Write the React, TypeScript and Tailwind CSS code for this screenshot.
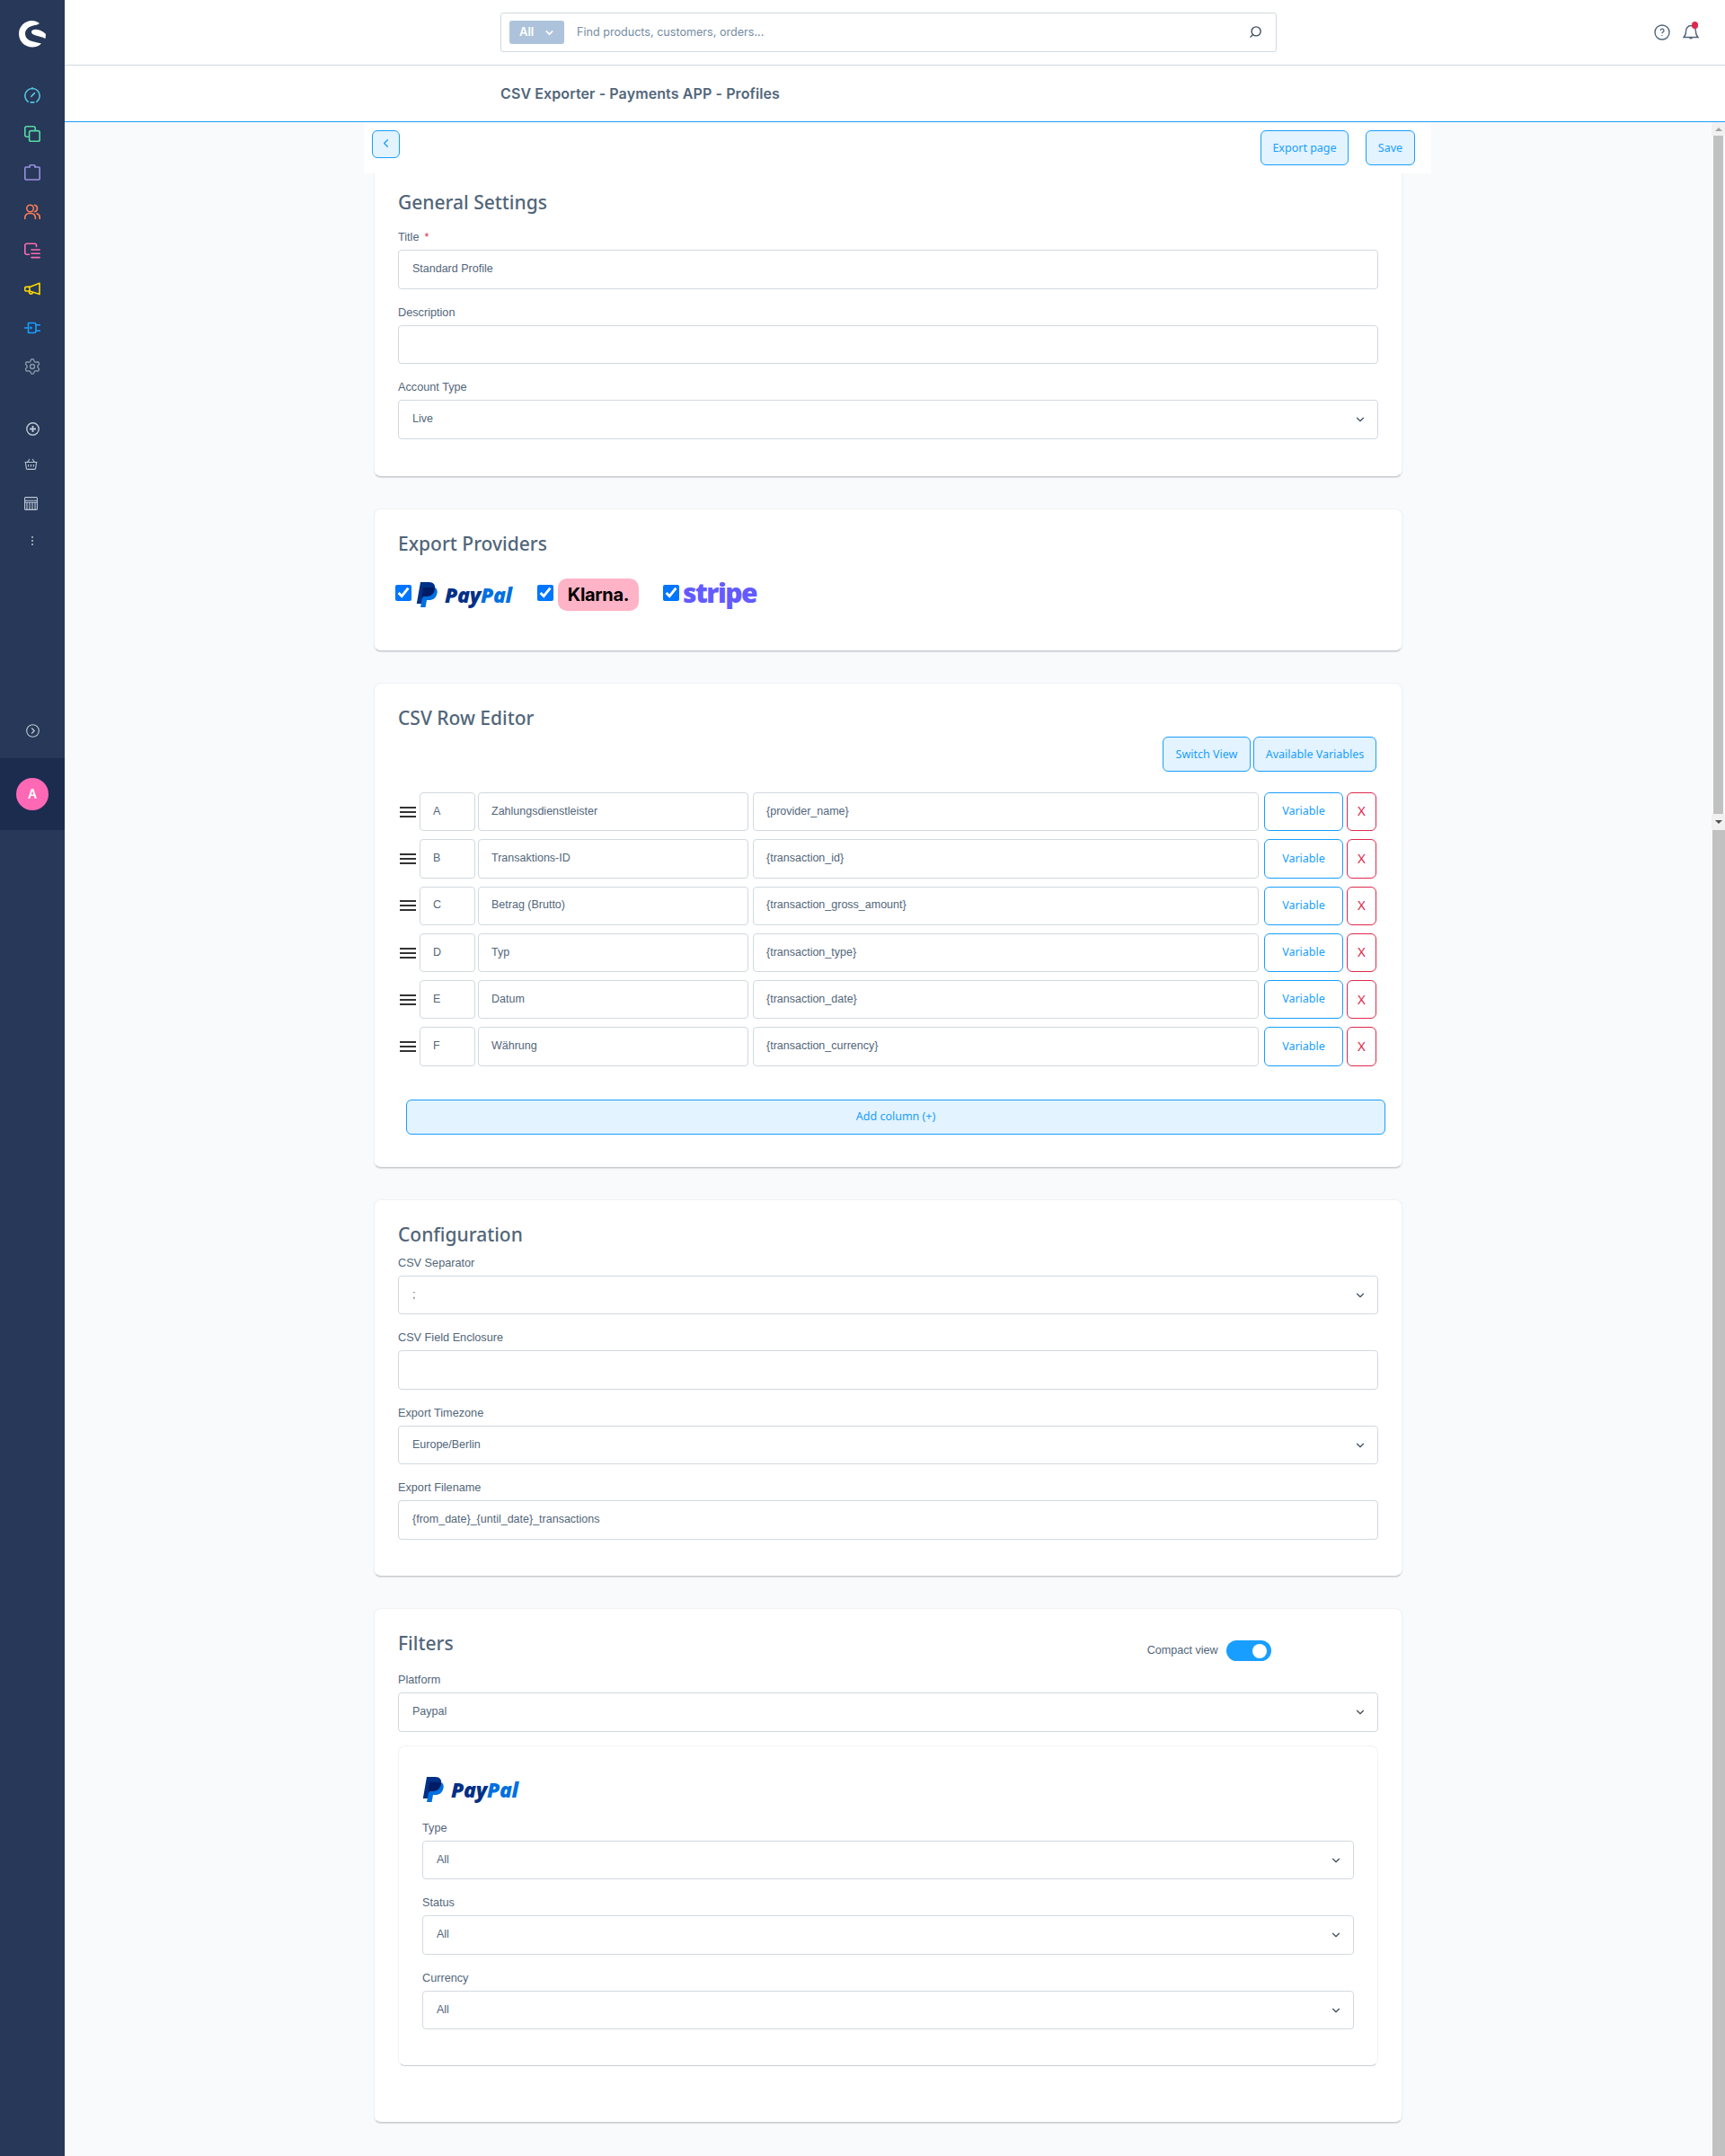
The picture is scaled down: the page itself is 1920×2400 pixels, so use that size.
import { ChevronDown, ChevronLeft, Search, Settings } from "lucide-react";

const uiFont = "font-['Liberation_Sans',Arial,sans-serif]";
const headFont = "font-['Noto_Sans',sans-serif]";

const rows = [
  ["A", "Zahlungsdienstleister", "{provider_name}"],
  ["B", "Transaktions-ID", "{transaction_id}"],
  ["C", "Betrag (Brutto)", "{transaction_gross_amount}"],
  ["D", "Typ", "{transaction_type}"],
  ["E", "Datum", "{transaction_date}"],
  ["F", "Währung", "{transaction_currency}"],
];

function NavIcons() {
  const base = {
    width: 18,
    height: 18,
    viewBox: "0 0 18 18",
    fill: "none",
    strokeWidth: 1.6,
    strokeLinecap: "round" as const,
    strokeLinejoin: "round" as const,
  };
  return (
    <div className="mt-[12px] flex flex-col">
      {/* ================= MODULES ================= */}
      <div className="flex h-[43.2px] items-center justify-center">
        <svg {...base} stroke="#57c3df">
          <path d="M4.2 16.3A8.2 8.2 0 1 1 13.8 16.3" />
          <path d="M7.2 16.9h3.6" />
          <path d="M7.8 10.4 11.4 6.6" />
          <path d="M9 .8v1" />
        </svg>
      </div>
      <div className="flex h-[43.2px] items-center justify-center">
        <svg {...base} stroke="#57d9a3">
          <path d="M4.8 12.2H2.6A1.8 1.8 0 0 1 .8 10.4V2.6A1.8 1.8 0 0 1 2.6.8h7.8a1.8 1.8 0 0 1 1.8 1.8v2.2" />
          <rect x="5.6" y="5.6" width="11.6" height="11.6" rx="1.8" />
        </svg>
      </div>
      <div className="flex h-[43.2px] items-center justify-center">
        <svg {...base} stroke="#9a8fe0">
          <path d="M6 3H2a1.2 1.2 0 0 0-1.2 1.2v11.6A1.2 1.2 0 0 0 2 17h14a1.2 1.2 0 0 0 1.2-1.2V4.2A1.2 1.2 0 0 0 16 3h-4" />
          <path d="M6 3V1.8A1 1 0 0 1 7 .8h4a1 1 0 0 1 1 1V3" />
        </svg>
      </div>
      <div className="flex h-[43.2px] items-center justify-center pt-[1px]">
        <svg {...base} stroke="#ff7d55">
          <circle cx="6.6" cy="5" r="3.8" />
          <path d="M.8 16.5V15a4.5 4.5 0 0 1 4.5-4.5h2.6A4.5 4.5 0 0 1 12.4 15v1.5" />
          <path d="M11.5 1.3a3.8 3.8 0 0 1 0 7.4" />
          <path d="M14 10.8a4.3 4.3 0 0 1 3.2 4.2v1.5" />
        </svg>
      </div>
      <div className="flex h-[43.2px] items-center justify-center pt-[1px]">
        <svg {...base} stroke="#ff68b4">
          <path d="M13.5 4.5V3a1.8 1.8 0 0 0-1.8-1.8H2.6A1.8 1.8 0 0 0 .8 3v8.5a1.8 1.8 0 0 0 1.8 1.8h2.9" />
          <path d="M8 8h9.2M8 12.3h9.2M8 16.6h9.2" />
        </svg>
      </div>
      <div className="flex h-[43.2px] items-center justify-center">
        <svg {...base} stroke="#ffd700">
          <path d="M17 2.2 6 6.4H1.8a1 1 0 0 0-1 1V10a1 1 0 0 0 1 1H6l11 3.6Z" />
          <path d="M6 6.4V11" />
          <path d="M5.6 11.5a2 2 0 0 0 3.9 1.2" />
        </svg>
      </div>
      <div className="flex h-[43.2px] items-center justify-center">
        <svg {...base} stroke="#189eff">
          <path d="M4.5 3.500H11a2 2 0 0 1 2 2v7a2 2 0 0 1-2 2H4.500Z" />
          <path d="M.5 9h4M13 5.800h4.500M13 12.200h4.500" />
          <circle cx="7.500" cy="9" r=".6" />
        </svg>
      </div>
      <div className="flex h-[43.2px] items-center justify-center">
        <Settings size={20} strokeWidth={1.7} color="#8799ab" />
      </div>
    </div>
  );
}

function QuickIcons() {
  const stroke = "#bcc8d6";
  return (
    <div className="mt-[27px] flex flex-col">
      <div className="flex h-[41px] items-center justify-center">
        <svg width="15" height="15" viewBox="0 0 15 15" fill="none" stroke={stroke} strokeWidth="1.4">
          <circle cx="7.500" cy="7.500" r="6.700" />
          <path d="M7.500 4v7M4 7.500h7" strokeWidth="1.800" />
        </svg>
      </div>
      <div className="flex h-[41px] items-center justify-center pb-[4px] pr-[4px]">
        <svg width="15" height="13" viewBox="0 0 15 13" fill="none" stroke={stroke} strokeWidth="1.100">
          <path d="M.6 4.500h13.800M1.400 4.500l1 7a1 1 0 0 0 1 .9h8.200a1 1 0 0 0 1-.9l1-7" />
          <path d="M3.500 4.500 6 1M11.500 4.500 9 1" />
          <path d="M4.700 7v2.600M7.500 7v2.600M10.300 7v2.600" />
        </svg>
      </div>
      <div className="flex h-[43px] items-center justify-center pr-[4px]">
        <svg width="15" height="15" viewBox="0 0 15 15" fill="none" stroke={stroke} strokeWidth="1.100">
          <rect x=".6" y=".6" width="13.800" height="13.800" rx="1" />
          <path d="M.6 4.200h13.800M.6 6.300h13.800" />
          <path d="M3 6.300v8M6 6.300v8M9 6.300v8M12 6.300v8" />
        </svg>
      </div>
      <div className="flex h-[41px] flex-col items-center justify-center gap-[2px]">
        <span className="h-[2px] w-[2px] rounded-full bg-[#bcc8d6]" />
        <span className="h-[2px] w-[2px] rounded-full bg-[#bcc8d6]" />
        <span className="h-[2px] w-[2px] rounded-full bg-[#bcc8d6]" />
      </div>
    </div>
  );
}

function Sidebar() {
  return (
    <aside className="flex w-[72px] shrink-0 flex-col bg-[#273858]">
      <div className="flex h-[72px] items-center justify-center pt-[3px]">
        <svg width="30" height="30" viewBox="0 0 30 30" fill="#fff">
          <path d="M23 3C20.500 1 17.500 0 14.500 0 6.500 0 0 6.500 0 14.500 0 23 6.500 29.500 15 29.500c4 0 7.500-1.500 10-4-2-.5-6-1.500-10-2.500-4.500-1-8-4-8-8.500C7 10 11 6.500 16 5.500c2.500-.5 5-1 7-2.500Z" />
          <path d="M14 12.500c0-3 5-3.500 9-2 3 1 5.500 3 7 4.500l-.5 5c-3.500-2-7-2.500-10.500-3.500-3-.8-5-1.700-5-4Z" />
        </svg>
      </div>
      <NavIcons />
      <QuickIcons />
      <div className="mt-[177px] flex h-[28px] items-center justify-center">
        <svg width="15" height="15" viewBox="0 0 15 15" fill="none" stroke="#bcc8d6" strokeWidth="1.100">
          <circle cx="7.500" cy="7.500" r="6.800" />
          <path d="M6.200 4.500 9.200 7.500 6.200 10.500" strokeWidth="1.300" />
        </svg>
      </div>
      <div className="mt-[16px] flex h-[80px] items-center justify-center bg-[#1b2c4f]">
        <div className="flex h-[36px] w-[36px] items-center justify-center rounded-full bg-[#ff68b4] font-['Inter',sans-serif] text-[14px] font-semibold text-white">
          A
        </div>
      </div>
    </aside>
  );
}

function Topbar() {
  return (
    <>
      <header className="flex h-[73px] items-center border-b border-[#d1d9e0] bg-white pl-[485px] pr-[29px] font-['Inter',sans-serif]">
        <div className="flex h-[44px] w-[864px] items-center rounded-[3px] border border-[#d1d9e0] pl-[9px] pr-[15px]">
          <div className="flex h-[26px] w-[61px] items-center gap-[11px] rounded-[3px] bg-[#adc3db] pl-[11px] text-[13px] font-semibold text-white">
            All
            <ChevronDown size={13} strokeWidth={3} />
          </div>
          <span className="ml-[14px] pt-[1px] text-[12.600px] text-[#758ca3]">Find products, customers, orders...</span>
          <Search size={15} strokeWidth={2.2} color="#3d4c5c" className="ml-auto -mt-[2px] -scale-x-100" />
        </div>
        <div className="ml-auto flex items-center gap-[14px]">
          <svg width="18" height="18" viewBox="0 0 18 18" fill="none" stroke="#52667a" strokeWidth="1.400">
            <circle cx="9" cy="9" r="8" />
            <path d="M7.200 7a1.900 1.900 0 1 1 2.600 1.800c-.6.3-.8.600-.8 1.400" strokeWidth="1.300" />
            <path d="M9 12.300v.6" strokeWidth="1.500" />
          </svg>
          <div className="relative h-[18px] w-[18px]">
            <svg width="18" height="18" viewBox="0 0 18 18" fill="none" stroke="#52667a" strokeWidth="1.400">
              <path d="M14.500 8c0-3.300-2.300-6.500-5.500-6.500S3.500 4.700 3.500 8c0 3-.8 5-2.500 6.500h16c-1.700-1.500-2.500-3.500-2.500-6.500Z" />
              <path d="M7.500 15a1.700 1.700 0 0 0 3 0" />
            </svg>
            <span className="absolute right-[1px] top-[-3px] h-[8px] w-[7px] rounded-full bg-[#de294c]" />
          </div>
        </div>
      </header>
      <div className="flex h-[63px] items-center border-b border-[#189eff] bg-white pl-[485px] font-['Inter',sans-serif] text-[16px] font-semibold tracking-[0.1px] text-[#52667a]">
        CSV Exporter - Payments APP - Profiles
      </div>
    </>
  );
}

function Label({ text, required }: { text: string; required?: boolean }) {
  return (
    <label className={`mb-[6px] block h-[18px] text-[12.700px] leading-[20px] text-[#52667a] ${uiFont}`}>
      {text}
      {required && <span className="ml-[6px] text-[#de294c]">*</span>}
    </label>
  );
}

function Field({ label, value, required, select }: { label: string; value?: string; required?: boolean; select?: boolean }) {
  return (
    <div className="mb-[16px] last:mb-0">
      <Label text={label} required={required} />
      <div className={`flex h-[43.5px] items-center justify-between rounded-[4px] border border-[#d1d9e0] bg-white pl-[15px] pr-[12px] text-[12.500px] text-[#52667a] ${uiFont}`}>
        <span className="-mt-[1px]">{value}</span>
        {select && <ChevronDown size={14} strokeWidth={2} color="#3d4c5c" />}
      </div>
    </div>
  );
}

function Heading({ children }: { children: React.ReactNode }) {
  return <h2 className={`h-[30px] text-[21px] font-medium leading-[30px] text-[#52667a] ${headFont}`}>{children}</h2>;
}

function LightButton({ children, className = "" }: { children: React.ReactNode; className?: string }) {
  return (
    <button className={`flex items-center justify-center rounded-[6px] border border-[#189eff] bg-[#e3f3ff] text-[12.500px] text-[#189eff] ${headFont} ${className}`}>
      {children}
    </button>
  );
}

function PayPalLogo() {
  return (
    <div className="flex h-[29px] w-[108px] items-center">
      <svg width="24" height="28" viewBox="0 0 24 28" className="shrink-0">
        <path d="M5 0h9.500c5 0 7.500 3 6.500 8-1 5.500-5 8-10 8H8l-1.500 8H.8Z" fill="#003087" />
        <path d="M9 6h10.500c3.500 0 4.800 3 4 6.500-1 5-4.500 7.500-9 7.500h-2.500l-1.400 8H5Z" fill="#0070e0" />
        <path d="M8 6h12.500c.5 0 .5 1.500.5 2-1 5.500-5 8-10 8H8l-.3 1.500H6.500Z" fill="#001c64" />
      </svg>
      <span className="ml-[8px] whitespace-nowrap font-['Open_Sans',sans-serif] text-[23px] font-extrabold italic leading-none tracking-[-0.3px]">
        <span className="text-[#003087]">Pay</span>
        <span className="text-[#0070e0]">Pal</span>
      </span>
    </div>
  );
}

function Card({ children, className = "" }: { children: React.ReactNode; className?: string }) {
  return (
    <section className={`rounded-[8px] border border-[#f0f2f5] border-b-[#c9ced3] bg-white px-[26px] shadow-[0_1px_1px_rgba(120,130,140,0.25)] ${className}`}>
      {children}
    </section>
  );
}

function ColumnRow({ letter, name, value }: { letter: string; name: string; value: string }) {
  const cell = `flex h-full items-center rounded-[4px] border border-[#d1d9e0] pl-[14px] text-[12.500px] text-[#52667a] ${uiFont}`;
  return (
    <div className="ml-[2px] flex h-[43.300px] items-stretch">
      <div className="mr-[4px] flex w-[18px] flex-col justify-center gap-[3px]">
        <span className="h-[2px] bg-[#333]" />
        <span className="h-[2px] bg-[#333]" />
        <span className="h-[2px] bg-[#333]" />
      </div>
      <div className={`${cell} w-[62px]`}>
        <span className="-mt-[1px]">{letter}</span>
      </div>
      <div className={`${cell} ml-[3px] w-[301px]`}>
        <span className="-mt-[1px]">{name}</span>
      </div>
      <div className={`${cell} ml-[5px] w-[563px]`}>
        <span className="-mt-[1px]">{value}</span>
      </div>
      <button className={`ml-[6px] w-[88px] rounded-[6px] border border-[#189eff] text-[12.500px] text-[#189eff] ${headFont}`}>
        Variable
      </button>
      <button className={`ml-[4px] w-[33px] rounded-[6px] border border-[#de294c] pb-[2px] text-[15px] text-[#de294c] ${headFont}`}>
        X
      </button>
    </div>
  );
}

function Scrollbar() {
  return (
    <div className="absolute bottom-0 right-0 top-0 flex w-[15px] flex-col">
      <div className="flex h-[15px] items-center justify-center bg-[#f1f1f1]">
        <span className="h-0 w-0 border-x-[4px] border-b-[4px] border-x-transparent border-b-[#a3a3a3]" />
      </div>
      <div className="ml-[2px] mr-[2px] h-[755px] bg-[#c1c1c1]" />
      <div className="flex h-[18px] items-center justify-center bg-[#f1f1f1]">
        <span className="h-0 w-0 border-x-[4px] border-t-[4px] border-x-transparent border-t-[#505050]" />
      </div>
      <div className="ml-[1px] flex-1 bg-[#c1c1c1]" />
    </div>
  );
}

export default function App() {
  return (
    <div className="flex min-h-[2400px] bg-[#f9fafb]">
      <Sidebar />
      <main className="flex min-w-0 flex-1 flex-col">
        <Topbar />

        <div className="relative flex-1 pr-[15px]">
          <Scrollbar />
          <div className="mx-auto w-[1145px]">
            {/* ================= ACTION BAR ================= */}
            <div className="-ml-[11px] flex h-[57px] w-[1188px] items-start bg-white pt-[9px] pl-[9px]">
              <LightButton className="h-[31px] w-[31px] pb-[3px]">
                <ChevronLeft size={15} strokeWidth={2} />
              </LightButton>
              <LightButton className="ml-auto h-[39px] w-[98px] pt-[1px]">Export page</LightButton>
              <LightButton className="ml-[19px] mr-[18px] h-[39px] w-[55px] pt-[1px]">Save</LightButton>
            </div>

            {/* ================= GENERAL ================= */}
            <Card className="rounded-t-none border-t-0 pb-[41px] pt-[17px]">
              <Heading>General Settings</Heading>
              <div className="mt-[14px]">
                <Field label="Title" required value="Standard Profile" />
                <Field label="Description" />
                <Field label="Account Type" value="Live" select />
              </div>
            </Card>

            {/* ================= PROVIDERS ================= */}
            <Card className="mt-[35.5px] pb-[44px] pt-[23px]">
              <Heading>Export Providers</Heading>
              <div className="mt-[24px] flex h-[36px] items-center">
                <input type="checkbox" defaultChecked className="-mt-[4px] ml-[-3px] h-[18px] w-[18px]" />
                <div className="ml-[5px]">
                  <PayPalLogo />
                </div>
                <input type="checkbox" defaultChecked className="-mt-[4px] ml-[27px] h-[18px] w-[18px]" />
                <div className="ml-[5px] flex h-[36px] w-[90px] items-center justify-center rounded-[10px] bg-[#ffb3c7] font-['Inter',sans-serif] text-[20px] font-bold tracking-[-0.3px] text-black">
                  Klarna.
                </div>
                <input type="checkbox" defaultChecked className="-mt-[4px] ml-[27px] h-[18px] w-[18px]" />
                <span className="ml-[4px] -mt-[4px] font-['Open_Sans',sans-serif] text-[30px] font-extrabold leading-none tracking-[-1.5px] text-[#635bff]">
                  stripe
                </span>
              </div>
            </Card>

            {/* ================= ROW EDITOR ================= */}
            <Card className="mt-[35px] pb-[36px] pt-[23px]">
              <Heading>CSV Row Editor</Heading>
              <div className="mt-[6px] flex justify-end gap-[3px] pr-[2px]">
                <LightButton className="h-[39px] w-[98px] pt-[1px]">Switch View</LightButton>
                <LightButton className="h-[39px] w-[137px] pt-[1px]">Available Variables</LightButton>
              </div>
              <div className="mt-[23px] flex flex-col gap-[9px]">
                {rows.map(([letter, name, value]) => (
                  <ColumnRow key={letter} letter={letter} name={name} value={value} />
                ))}
              </div>
              <LightButton className="ml-[9px] mt-[37px] h-[39px] w-[1090px] pt-[1px]">Add column (+)</LightButton>
            </Card>

            {/* ================= CONFIGURATION ================= */}
            <Card className="mt-[35px] pb-[40px] pt-[23px]">
              <Heading>Configuration</Heading>
              <div className="mt-[7px]">
                <Field label="CSV Separator" value=";" select />
                <Field label="CSV Field Enclosure" />
                <Field label="Export Timezone" value="Europe/Berlin" select />
                <Field label="Export Filename" value="{from_date}_{until_date}_transactions" />
              </div>
            </Card>

            {/* ================= FILTERS ================= */}
            <Card className="mt-[35.5px] pb-[62px] pt-[23px]">
              <div className="flex h-[30px] items-start">
                <Heading>Filters</Heading>
                <div className="ml-[772px] mt-[12px] flex items-center">
                  <span className={`text-[12.600px] text-[#52667a] ${uiFont}`}>Compact view</span>
                  <div className="ml-[9px] flex h-[23px] w-[50px] items-center justify-end rounded-full bg-[#189eff] pr-[5px]">
                    <span className="h-[16px] w-[16px] rounded-full bg-white" />
                  </div>
                </div>
              </div>
              <div className="mt-[16px]">
                <Field label="Platform" value="Paypal" select />
              </div>
              <div className="mt-[15px] rounded-[8px] border border-[#f0f2f5] border-b-[#c9ced3] bg-white px-[26px] pb-[40px] pt-[34px]">
                <PayPalLogo />
                <div className="mt-[18px]">
                  <Field label="Type" value="All" select />
                  <Field label="Status" value="All" select />
                  <Field label="Currency" value="All" select />
                </div>
              </div>
            </Card>
          </div>
        </div>
      </main>
    </div>
  );
}
